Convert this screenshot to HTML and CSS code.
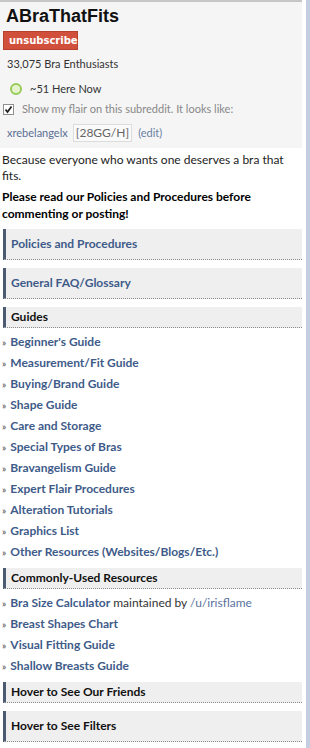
FILE: index.html
```html
<!DOCTYPE html>
<html lang="en">
<head>
    <meta charset="UTF-8">
    <title>ABraThatFits</title>
    <link rel="stylesheet" href="styles.css">
</head>
<body>
    <div class="wrap">
        <div class="sidebar">
            <div class="titlebox">
                <h1>ABraThatFits</h1>
                <button class="unsub">unsubscribe</button>
                <div class="subscribers">33,075 Bra Enthusiasts</div>
                <div class="online"><span class="dot"></span>~51 Here Now</div>
                <div class="flairopt">
                    <span class="check">
                        <svg width="11" height="11" viewBox="0 0 11 11"><rect x="0.5" y="0.5" width="10" height="10" fill="#fff" stroke="#8f8f8f"/><path d="M2.5 5.5 L4.5 8 L8.5 2.5" fill="none" stroke="#222" stroke-width="1.8"/></svg>
                    </span>
                    Show my flair on this subreddit. It looks like:
                </div>
                <div class="flair">
                    <span class="user">xrebelangelx</span>
                    <span class="tag">[28GG/H]</span>
                    <span class="edit">(edit)</span>
                </div>
            </div>

            <div class="md">
                <p>Because everyone who wants one deserves a bra that fits.</p>
                <p class="bold">Please read our Policies and Procedures before commenting or posting!</p>

                <h3 class="hd tall link first">Policies and Procedures</h3>
                <h3 class="hd tall link">General FAQ/Glossary</h3>

                <h3 class="hd">Guides</h3>
                <ul>
                    <li><a href="#">Beginner's Guide</a></li>
                    <li><a href="#">Measurement/Fit Guide</a></li>
                    <li><a href="#">Buying/Brand Guide</a></li>
                    <li><a href="#">Shape Guide</a></li>
                    <li><a href="#">Care and Storage</a></li>
                    <li><a href="#">Special Types of Bras</a></li>
                    <li><a href="#">Bravangelism Guide</a></li>
                    <li><a href="#">Expert Flair Procedures</a></li>
                    <li><a href="#">Alteration Tutorials</a></li>
                    <li><a href="#">Graphics List</a></li>
                    <li><a href="#">Other Resources (Websites/Blogs/Etc.)</a></li>
                </ul>

                <h3 class="hd">Commonly-Used Resources</h3>
                <ul>
                    <li><a href="#">Bra Size Calculator</a> maintained by <a class="plain" href="#">/u/irisflame</a></li>
                    <li><a href="#">Breast Shapes Chart</a></li>
                    <li><a href="#">Visual Fitting Guide</a></li>
                    <li><a href="#">Shallow Breasts Guide</a></li>
                </ul>

                <h3 class="hd">Hover to See Our Friends</h3>
                <h3 class="hd tall">Hover to See Filters</h3>
            </div>
        </div>
        <div class="edge"></div>
    </div>
</body>
</html>
```

FILE: styles.css
```css
body {
    margin: 0;
    background-color: #ffffff;
    font-family: Lato, "Open Sans", sans-serif;
    font-size: 12px;
    color: #222;
}
.wrap {
    display: flex;
    height: 748px;
    overflow: hidden;
}
.sidebar {
    width: 306px;
}
.edge {
    width: 4px;
    background-color: #c4cee0;
}
.titlebox {
    width: 302px;
    background-color: #f5f5f5;
    border-top: 2px solid #c6c6c6;
    padding: 2px 0 9px 0;
    box-sizing: border-box;
    height: 148px;
}
h1 {
    font-family: "Liberation Sans", Arial, sans-serif;
    font-size: 18px;
    font-weight: bold;
    color: #111;
    margin: 0 0 0 6px;
    line-height: 24px;
}
.unsub {
    display: block;
    margin: 3px 0 0 3px;
    background-color: #d0503c;
    border: 1px solid #b8402e;
    color: #fff;
    font-family: "DejaVu Sans", Verdana, sans-serif;
    font-weight: bold;
    font-size: 10px;
    padding: 0 5px;
    height: 19px;
    width: 75px;
}
.subscribers {
    margin: 6px 0 0 7px;
    font-size: 11px;
    color: #333;
    line-height: 16px;
}
.online {
    margin: 9px 0 0 10px;
    font-size: 11px;
    color: #333;
    display: flex;
    align-items: center;
    line-height: 16px;
}
.dot {
    width: 8px;
    height: 8px;
    border: 2px solid #9acb5a;
    border-radius: 50%;
    background-color: #e6f3cf;
    margin-right: 8px;
}
.flairopt {
    margin: 4px 0 0 3px;
    display: flex;
    align-items: center;
    font-size: 11px;
    color: #888;
    line-height: 16px;
}
.check {
    display: flex;
    margin-right: 8px;
}
.flair {
    margin: 7px 0 0 7px;
    font-size: 11px;
    line-height: 16px;
    display: flex;
    align-items: center;
}
.user {
    color: #5a6f94;
}
.tag {
    color: #666;
    background-color: #fafafa;
    border: 1px solid #dcdcdc;
    padding: 0 2px;
    margin: 0 6px 0 5px;
    font-size: 12px;
}
.edit {
    color: #6a7fa3;
}
.md {
    width: 302px;
    padding: 0 0 0 2px;
    box-sizing: border-box;
}
.md p {
    margin: 4px 0 0 0;
    line-height: 16px;
}
.md p.bold {
    font-weight: bold;
    color: #000;
    margin-top: 4px;
    line-height: 17px;
}
.hd {
    margin: 8px 0 0 1px;
    padding: 0 0 0 5px;
    height: 21px;
    line-height: 20px;
    font-size: 12px;
    font-weight: bold;
    color: #111;
    background-color: #efefef;
    border-left: 3px solid #4d5b72;
    border-bottom: 1px dotted #8a8a8a;
    box-sizing: border-box;
}
.hd.first {
    margin-top: 7px;
}
.hd.tall {
    height: 31px;
    line-height: 30px;
}
.hd.link {
    color: #3e5b89;
}
ul {
    list-style: none;
    margin: 3px 0 -2px 0;
    padding: 0;
}
li {
    height: 21px;
    line-height: 21px;
    color: #333;
}
li::before {
    content: "\00bb";
    font-size: 10px;
    line-height: 10px;
    color: #444;
    margin-right: 4px;
}
a {
    color: #3e5b89;
    font-weight: bold;
    text-decoration: none;
}
a.plain {
    font-weight: normal;
    color: #5a73a0;
}
```
